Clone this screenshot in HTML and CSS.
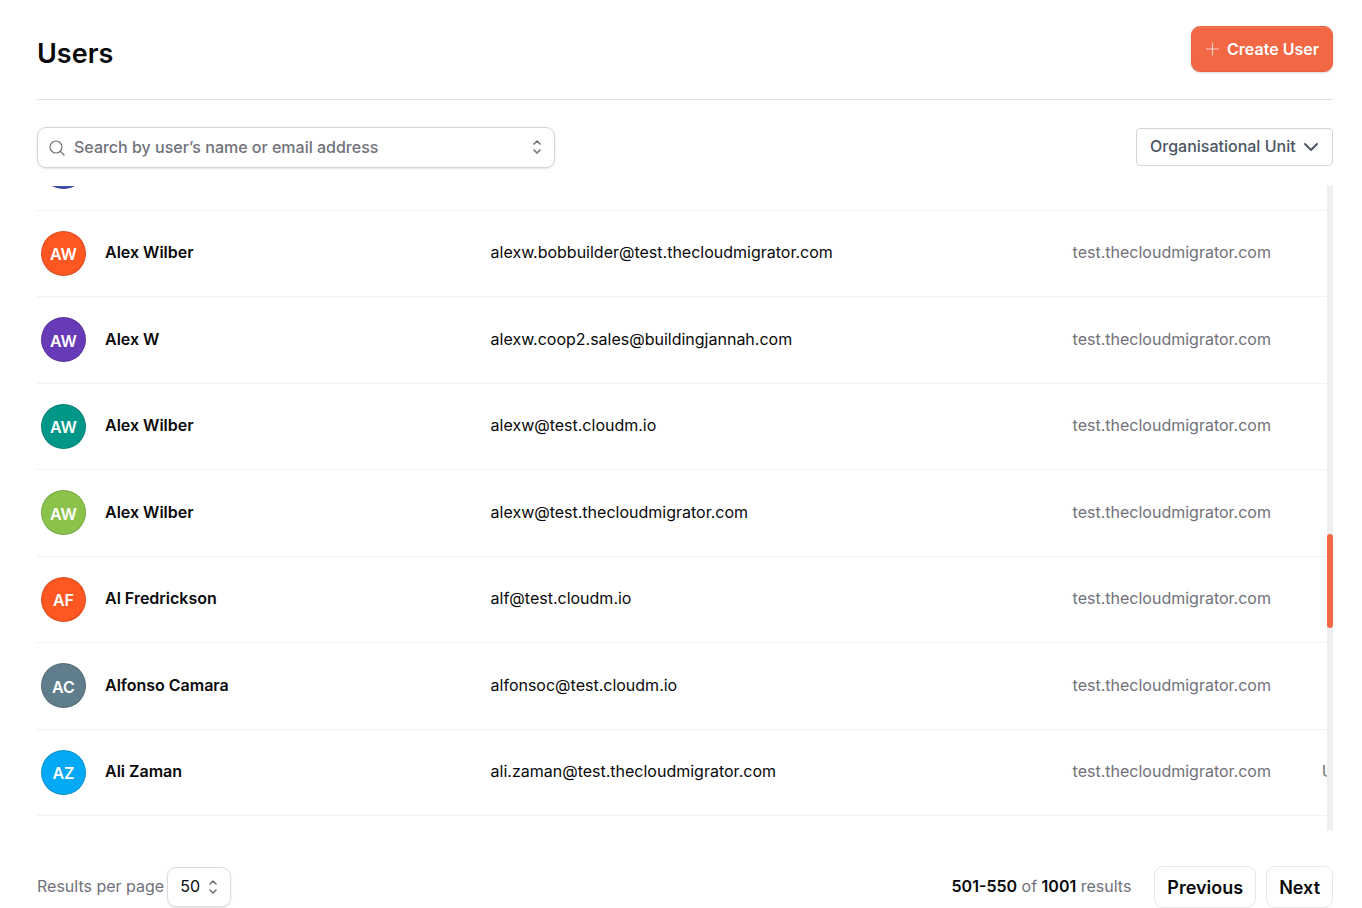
FILE: index.html
```
<!DOCTYPE html>
<html lang="en">
<head>
  <meta charset="UTF-8">
  <meta name="viewport" content="width=device-width, initial-scale=1.0">
  <title>Users</title>
  <link rel="stylesheet" href="styles.css">
</head>
<body>
  <main class="page">
    <header class="page-header">
      <h1>Users</h1>
      <button type="button" class="create-button">
        <svg width="14" height="14" viewBox="0 0 14 14" fill="none" stroke="currentColor" stroke-width="1.2" stroke-linecap="round" aria-hidden="true"><path d="M7.5 1v12M1.5 7h12"/></svg>
        Create User
      </button>
    </header>

    <div class="filters">
      <div class="search-box">
        <svg width="16" height="16" viewBox="0 0 16 16" fill="none" stroke="currentColor" stroke-width="1.2" stroke-linecap="round" aria-hidden="true"><circle cx="7" cy="7" r="6"/><path d="M11.3 11.3L15 15"/></svg>
        <input type="text" aria-label="Search users" placeholder="Search by user’s name or email address">
        <button type="button" class="search-toggle" aria-label="Show users">
          <svg width="8" height="14" viewBox="0 0 8 14" fill="none" stroke="currentColor" stroke-width="1.6" stroke-linecap="round" stroke-linejoin="round" aria-hidden="true"><path d="M1 4l3-3 3 3M1 10l3 3 3-3"/></svg>
        </button>
      </div>
      <div class="select-box unit-select">
        <select aria-label="Organisational Unit">
          <option>Organisational Unit</option>
        </select>
        <svg width="16" height="10" viewBox="0 0 16 10" fill="none" stroke="currentColor" stroke-width="2" stroke-linecap="round" stroke-linejoin="round" aria-hidden="true"><path d="M2 2l6 6 6-6"/></svg>
      </div>
    </div>

    <section class="user-list">
      <div class="user-rows">
        <table aria-label="Users">
          <colgroup>
            <col class="col-name">
            <col class="col-email">
            <col class="col-domain">
            <col>
          </colgroup>
          <tbody>
            <tr>
              <td><div class="user"><span class="avatar indigo"></span></div></td>
              <td></td>
              <td></td>
              <td></td>
            </tr>
            <tr>
              <td><div class="user"><span class="avatar orange">AW</span><span class="cell-text">Alex Wilber</span></div></td>
              <td><div class="cell-text">alexw.bobbuilder@test.thecloudmigrator.com</div></td>
              <td><div class="cell-text muted">test.thecloudmigrator.com</div></td>
              <td></td>
            </tr>
            <tr>
              <td><div class="user"><span class="avatar purple">AW</span><span class="cell-text">Alex W</span></div></td>
              <td><div class="cell-text">alexw.coop2.sales@buildingjannah.com</div></td>
              <td><div class="cell-text muted">test.thecloudmigrator.com</div></td>
              <td></td>
            </tr>
            <tr>
              <td><div class="user"><span class="avatar teal">AW</span><span class="cell-text">Alex Wilber</span></div></td>
              <td><div class="cell-text">alexw@test.cloudm.io</div></td>
              <td><div class="cell-text muted">test.thecloudmigrator.com</div></td>
              <td></td>
            </tr>
            <tr>
              <td><div class="user"><span class="avatar green">AW</span><span class="cell-text">Alex Wilber</span></div></td>
              <td><div class="cell-text">alexw@test.thecloudmigrator.com</div></td>
              <td><div class="cell-text muted">test.thecloudmigrator.com</div></td>
              <td></td>
            </tr>
            <tr>
              <td><div class="user"><span class="avatar orange">AF</span><span class="cell-text">Al Fredrickson</span></div></td>
              <td><div class="cell-text">alf@test.cloudm.io</div></td>
              <td><div class="cell-text muted">test.thecloudmigrator.com</div></td>
              <td></td>
            </tr>
            <tr>
              <td><div class="user"><span class="avatar slate">AC</span><span class="cell-text">Alfonso Camara</span></div></td>
              <td><div class="cell-text">alfonsoc@test.cloudm.io</div></td>
              <td><div class="cell-text muted">test.thecloudmigrator.com</div></td>
              <td></td>
            </tr>
            <tr>
              <td><div class="user"><span class="avatar blue">AZ</span><span class="cell-text">Ali Zaman</span></div></td>
              <td><div class="cell-text">ali.zaman@test.thecloudmigrator.com</div></td>
              <td><div class="cell-text muted">test.thecloudmigrator.com</div></td>
              <td><div class="cell-text muted">U</div></td>
            </tr>
          </tbody>
        </table>
      </div>
      <div class="scroll-track"><div class="scroll-thumb"></div></div>
    </section>

    <footer class="page-footer">
      <div class="per-page">
        <label for="per-page">Results per page</label>
        <div class="select-box count-select">
          <select id="per-page">
            <option>50</option>
          </select>
          <svg width="8" height="14" viewBox="0 0 8 14" fill="none" stroke="currentColor" stroke-width="1.6" stroke-linecap="round" stroke-linejoin="round" aria-hidden="true"><path d="M1 4l3-3 3 3M1 10l3 3 3-3"/></svg>
        </div>
      </div>
      <div class="pager">
        <p><strong>501-550</strong> of <strong>1001</strong> results</p>
        <button type="button">Previous</button>
        <button type="button">Next</button>
      </div>
    </footer>
  </main>
</body>
</html>
```
FILE: styles.css
```
* {
  box-sizing: border-box;
}
body {
  margin: 0;
  font-family: Inter, "Liberation Sans", sans-serif;
  font-size: 16px;
  line-height: 24px;
  color: #09090b;
  background: #fff;
}
button, input, select {
  font: inherit;
  color: inherit;
}
.page {
  display: flex;
  flex-direction: column;
  height: 100vh;
  padding: 26px 29px 0 37px;
}
.page-header {
  display: flex;
  align-items: flex-end;
  justify-content: space-between;
  padding-bottom: 27px;
  border-bottom: 1px solid #e4e4e7;
}
h1 {
  margin: 0;
  font-size: 27px;
  line-height: 36px;
  font-weight: 600;
}
.create-button {
  display: flex;
  align-items: center;
  gap: 8px;
  height: 46px;
  padding: 0 13px;
  border: 1px solid #e8623f;
  border-radius: 9px;
  background: #f26744;
  color: #fff;
  font-weight: 600;
  box-shadow: 0 1px 2px rgba(0,0,0,0.15), inset 0 1px rgba(255,255,255,0.15);
}
.create-button svg {
  opacity: 0.7;
}
.filters {
  display: flex;
  align-items: flex-start;
  justify-content: space-between;
  padding: 27px 0 18px;
}
.search-box {
  display: flex;
  align-items: center;
  gap: 9px;
  width: 40%;
  height: 41px;
  padding: 0 13px 0 11px;
  border: 1px solid #d4d4d6;
  border-radius: 9px;
  color: #71717a;
  box-shadow: 0 1px 2px rgba(0,0,0,0.12);
}
.search-box input {
  flex: 1;
  min-width: 0;
  padding: 0 0 2px;
  border: 0;
  outline: 0;
  background: none;
  font-weight: 500;
}
.search-box input::placeholder {
  color: #71717a;
}
.search-toggle {
  display: flex;
  padding: 0 0 1px;
  border: 0;
  background: none;
}

/* the arrow shares the grid cell with its select */
.select-box {
  display: grid;
  align-items: center;
  border: 1px solid #d1d5db;
}
.select-box select,
.select-box svg {
  grid-area: 1 / 1;
}
.select-box select {
  appearance: none;
  height: 100%;
  border: 0;
  background: none;
}
.select-box svg {
  justify-self: end;
  pointer-events: none;
  margin-right: 13px;
}
.unit-select {
  height: 38px;
  margin-top: 1px;
  border-radius: 4px;
  color: #4b5563;
}
.unit-select select {
  padding: 0 36px 2px 13px;
  font-weight: 500;
}

.user-list {
  display: flex;
  flex: 1;
  min-height: 0;
}
.user-rows {
  display: flex;
  flex: 1;
  flex-direction: column;
  justify-content: flex-end;
  min-width: 0;
  padding-bottom: 14px;
  overflow: hidden;
}
table {
  flex: none;
  width: 120%;
  height: 692px;
  table-layout: fixed;
  border-spacing: 0;
}
.col-name {
  width: 29.3%;
}
.col-email {
  width: 37.6%;
}
.col-domain {
  width: 16.1%;
}
td {
  padding: 0;
  border-bottom: 1px solid #f1f1f2;
}
.user {
  display: flex;
  align-items: center;
  gap: 19px;
  padding-left: 4px;
  font-weight: 600;
}
.cell-text {
  padding-bottom: 2px;
}
.avatar {
  display: flex;
  align-items: center;
  justify-content: center;
  width: 45px;
  height: 45px;
  padding-top: 2px;
  border: 1px solid rgba(0,0,0,0.15);
  border-radius: 50%;
  color: #fff;
}
.indigo {
  background-color: #3f51b5;
}
.orange {
  background-color: #ff5722;
}
.purple {
  background-color: #673ab7;
}
.teal {
  background-color: #009688;
}
.green {
  background-color: #8bc34a;
}
.slate {
  background-color: #607d8b;
}
.blue {
  background-color: #03a9f4;
}
.muted {
  color: #71717a;
}
.scroll-track {
  width: 6px;
  background: #efefef;
}
.scroll-track::before {
  content: "";
  display: block;
  height: 54%;
}
.scroll-thumb {
  height: 94px;
  border-radius: 3px;
  background: #f26744;
}

.page-footer {
  display: flex;
  align-items: center;
  justify-content: space-between;
  padding-top: 36px;
  color: #71717a;
}
.per-page,
.pager {
  display: flex;
  align-items: center;
}
.per-page {
  gap: 3px;
}
.per-page label {
  padding-bottom: 2px;
}
.count-select {
  width: 64px;
  height: 40px;
  border-color: #dedee0;
  border-radius: 9px;
  box-shadow: 0 1px 2px rgba(0,0,0,0.12);
}
.count-select select {
  padding: 0 0 2px 12px;
  color: #09090b;
}
.pager p {
  margin: 0 13px 0 0;
  padding-bottom: 2px;
}
.pager strong {
  color: #09090b;
  font-weight: 600;
}
.pager button {
  height: 42px;
  margin-left: 10px;
  padding: 2px 12px 0;
  border: 1px solid #e7e7e8;
  border-radius: 9px;
  background: #fff;
  color: #09090b;
  font-size: 18px;
  font-weight: 600;
}
```
